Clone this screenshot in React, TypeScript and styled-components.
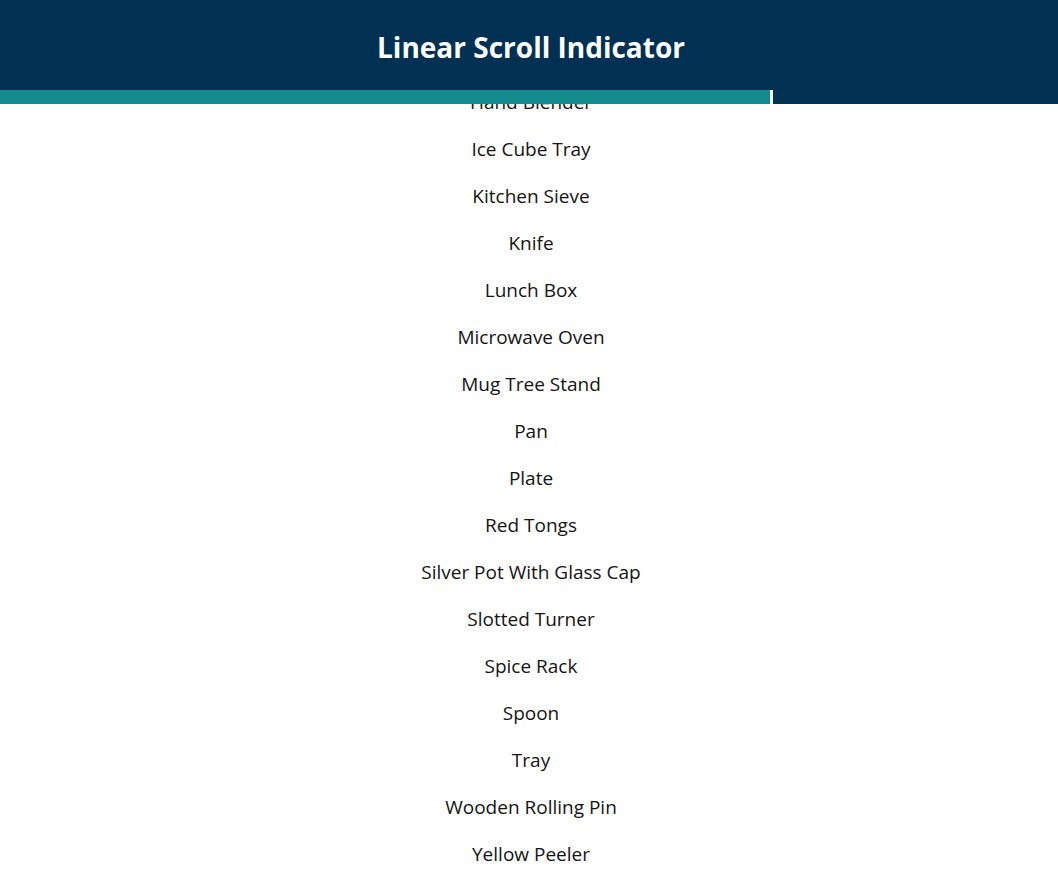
import React, { useLayoutEffect, useState } from 'react';
import styled, { createGlobalStyle } from 'styled-components';

const items = [
  'Apple Corer', 'Apron', 'Baking Dish', 'Baking Tray', 'Baster', 'Basting Brush',
  'Blender', 'Bottle Opener', 'Bread Basket', 'Bread Knife', 'Butter Dish', 'Cake Stand',
  'Can Opener', 'Carving Fork', 'Casserole Dish', 'Cheese Grater', 'Chef Knife',
  'Chopping Board', 'Citrus Juicer', 'Cleaver', 'Coffee Grinder', 'Coffee Mug', 'Colander',
  'Cookie Cutter', 'Cooking Pot', 'Cooling Rack', 'Corkscrew', 'Cutlery Set', 'Cutting Mat',
  'Deep Fryer', 'Dish Rack', 'Dish Towel', 'Dough Scraper', 'Dutch Oven', 'Egg Beater',
  'Egg Timer', 'Electric Kettle', 'Flour Sifter', 'Food Processor', 'Fork', 'Frying Pan',
  'Funnel', 'Garlic Press', 'Glass Bowl', 'Glass Jar', 'Grater', 'Gravy Boat', 'Griddle',
  'Grill Pan',
  'Hand Blender', 'Ice Cube Tray', 'Kitchen Sieve', 'Knife', 'Lunch Box', 'Microwave Oven',
  'Mug Tree Stand', 'Pan', 'Plate', 'Red Tongs', 'Silver Pot With Glass Cap', 'Slotted Turner',
  'Spice Rack', 'Spoon', 'Tray', 'Wooden Rolling Pin', 'Yellow Peeler',
];

const App = () => {
  const [progress, setProgress] = useState(0);

  useLayoutEffect(() => {
    const update = () => {
      const total = document.documentElement.scrollHeight;
      setProgress((window.scrollY / total) * 100);
    };
    window.scrollTo(0, document.documentElement.scrollHeight);
    update();
    window.addEventListener('scroll', update);
    return () => window.removeEventListener('scroll', update);
  }, []);

  return (
    <>
      <GlobalStyle />
      <Header>
        <Title>Linear Scroll Indicator</Title>
        <Track>
          <Bar style={{ width: `${progress}%` }} />
        </Track>
      </Header>
      <List>
        {items.map((item) => (
          <Item key={item}>{item}</Item>
        ))}
      </List>
    </>
  );
};

export default App;

const GlobalStyle = createGlobalStyle`
  html, body {
    margin: 0;
    padding: 0;
    background: #ffffff;
    font-family: "Open Sans", "Noto Sans", sans-serif;
  }
`;

const Header = styled.header`
  position: fixed;
  top: 0;
  left: 0;
  right: 0;
  z-index: 10;
  background: #003152;
`;

const Title = styled.h1`
  margin: 0;
  height: 90px;
  box-sizing: border-box;
  padding: 4px 0 0 4px;
  display: flex;
  align-items: center;
  justify-content: center;
  color: #ffffff;
  font-size: 28px;
  font-weight: 700;
`;

const Track = styled.div`
  height: 14px;
  background: #003152;
`;

const Bar = styled.div`
  height: 100%;
  background: #138b8c;
  border-right: 3px solid #ffffff;
  box-sizing: border-box;
`;

const List = styled.ul`
  list-style: none;
  margin: 0;
  padding: 154px 0 0 4px;
`;

const Item = styled.li`
  height: 47px;
  box-sizing: border-box;
  padding-top: 2px;
  line-height: 45px;
  text-align: center;
  font-size: 19px;
  color: #141414;
`;
